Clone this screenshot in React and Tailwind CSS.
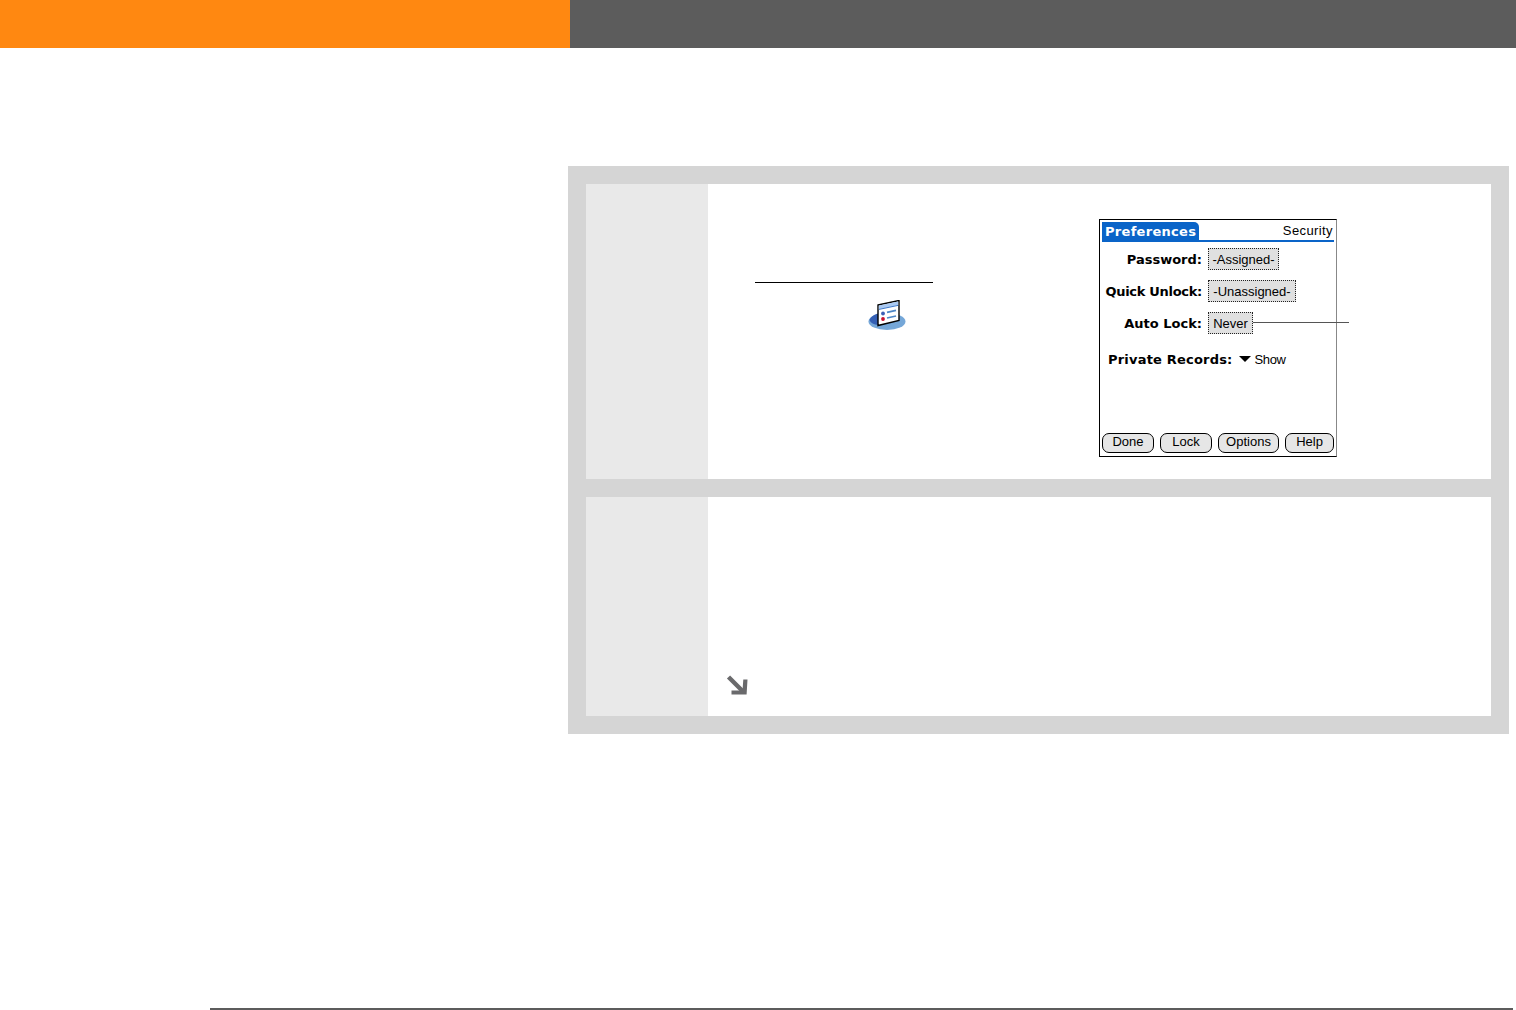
import React from "react";

const bold = "font-['DejaVu_Sans',sans-serif] font-bold text-[13px] leading-none text-black";
const reg = "font-['Liberation_Sans',Arial,sans-serif] text-[13px] leading-none text-black";

function PrefsIcon() {
  return (
    <svg width="38" height="32" viewBox="0 0 38 32" className="block">
      <ellipse cx="19" cy="21.5" rx="18.5" ry="8.5" fill="#75a7d8" />
      <path d="M1.5 20 C2.5 17 6 14.5 10 13.5 L10 25 C6 24.5 2.5 23 1.5 20Z" fill="#3560b4" />
      <polygon points="10,5 31,0.5 31,20.5 10,25.5" fill="#ffffff" stroke="#000000" strokeWidth="1.4" />
      <polygon points="10.8,5.6 30.2,1.4 30.2,5 10.8,9.2" fill="#a9c9f2" />
      <line x1="11" y1="9.4" x2="30" y2="5.4" stroke="#3d78c9" strokeWidth="1" />
      <circle cx="15" cy="13.5" r="1.9" fill="#3d5fb5" />
      <circle cx="15" cy="19" r="1.9" fill="#c8102e" />
      <line x1="19" y1="12.4" x2="28" y2="10.4" stroke="#4d86c6" strokeWidth="1.6" />
      <line x1="19" y1="18" x2="28" y2="16" stroke="#4d86c6" strokeWidth="1.6" />
    </svg>
  );
}

function Arrow() {
  return (
    <svg width="24" height="22" viewBox="0 0 24 22" className="block">
      <line x1="2.5" y1="2" x2="17" y2="16.5" stroke="#6a6a6c" strokeWidth="4.4" />
      <polygon points="21.5,4.5 20.6,19.6 5.5,19.6 5.5,15.5 16.5,15.5 17.3,4.5" fill="#6a6a6c" />
    </svg>
  );
}

function Field({ label, value, tight, w }) {
  return (
    <div className="flex items-center h-[22px]">
      <span className={`${bold} w-[98px] text-right whitespace-nowrap ${tight ? "tracking-[-0.3px]" : ""}`}>{label}</span>
      <span className={`${reg} ${w} ml-[6px] h-[22px] flex items-center justify-center bg-[#e0e0e0] border border-dotted border-[#222222] whitespace-nowrap`}>
        {value}
      </span>
    </div>
  );
}

function PalmButton({ children, w }) {
  return (
    <span className={`${reg} ${w} h-[20px] pb-[3px] flex items-center justify-center rounded-[7px] bg-[#e6e6e6] border border-black`}>
      {children}
    </span>
  );
}

function PalmScreen() {
  return (
    <div className="relative w-[238px] h-[238px] bg-white border border-black border-r-[#888888] flex flex-col pl-[2px] pr-[1px] pt-[1px]">
      <div className="flex items-end justify-between h-[21px] border-b-[2px] border-[#0a64c8] mr-[1px]">
        <span className="font-['DejaVu_Sans',sans-serif] font-bold text-[13px] tracking-[0.3px] leading-none text-white bg-[#0a64c8] w-[97px] h-[20px] -mb-[2px] pl-[3px] pb-[2px] flex items-center rounded-tr-[5px] whitespace-nowrap">
          Preferences
        </span>
        <span className={`${reg} tracking-[0.4px] pb-[3px] pr-[1px]`}>Security</span>
      </div>
      <div className="flex flex-col gap-[10px] mt-[6px] pl-[2px]">
        <Field label="Password:" value="-Assigned-" w="w-[71px]" />
        <Field label="Quick Unlock:" value="-Unassigned-" tight w="w-[88px]" />
        <Field label="Auto Lock:" value="Never" w="w-[45px]" />
      </div>
      <div className="flex items-center h-[16px] mt-[17px] pl-[6px]">
        <span className={`${bold} tracking-[0.2px] whitespace-nowrap`}>Private Records:</span>
        <span className="ml-[6px] w-0 h-0 border-x-[6px] border-x-transparent border-t-[6px] border-t-black" />
        <span className={`${reg} ml-[4px] tracking-[-0.4px]`}>Show</span>
      </div>
      <div className="mt-auto mb-[3px] flex items-center gap-[6px]">
        <PalmButton w="w-[52px]">Done</PalmButton>
        <PalmButton w="w-[52px]">Lock</PalmButton>
        <PalmButton w="w-[61px]">Options</PalmButton>
        <PalmButton w="w-[49px]">Help</PalmButton>
      </div>
      <div className="absolute left-[153px] top-[102px] w-[96px] h-px bg-[#555555]" />
    </div>
  );
}

export default function App() {
  return (
    <div className="w-[1516px] h-[1010px] bg-white flex flex-col overflow-hidden">
      <header className="flex h-12 shrink-0">
        <div className="w-[570px] bg-[#ff8811]" />
        <div className="flex-1 bg-[#5c5c5c]" />
      </header>

      <main className="mt-[118px] ml-[568px] w-[941px] bg-[#d5d5d5] p-[18px] flex flex-col gap-[18px]">
        <section className="flex h-[295px] bg-white">
          <div className="w-[122px] bg-[#e9e9e9]" />
          <div className="flex-1 flex">
            <div className="w-[391px] pl-[47px] pt-[98px]">
              <div className="w-[178px] h-px bg-black" />
              <div className="ml-[113px] mt-[17px]">
                <PrefsIcon />
              </div>
            </div>
            <div className="pt-[35px]">
              <PalmScreen />
            </div>
          </div>
        </section>

        <section className="flex h-[219px] bg-white">
          <div className="w-[122px] bg-[#e9e9e9]" />
          <div className="flex-1 flex items-end pl-[18px] pb-[19px]">
            <Arrow />
          </div>
        </section>
      </main>

      <footer className="mt-auto ml-[210px] w-[1303px] h-[2px] bg-[#5c5c5c]" />
    </div>
  );
}
